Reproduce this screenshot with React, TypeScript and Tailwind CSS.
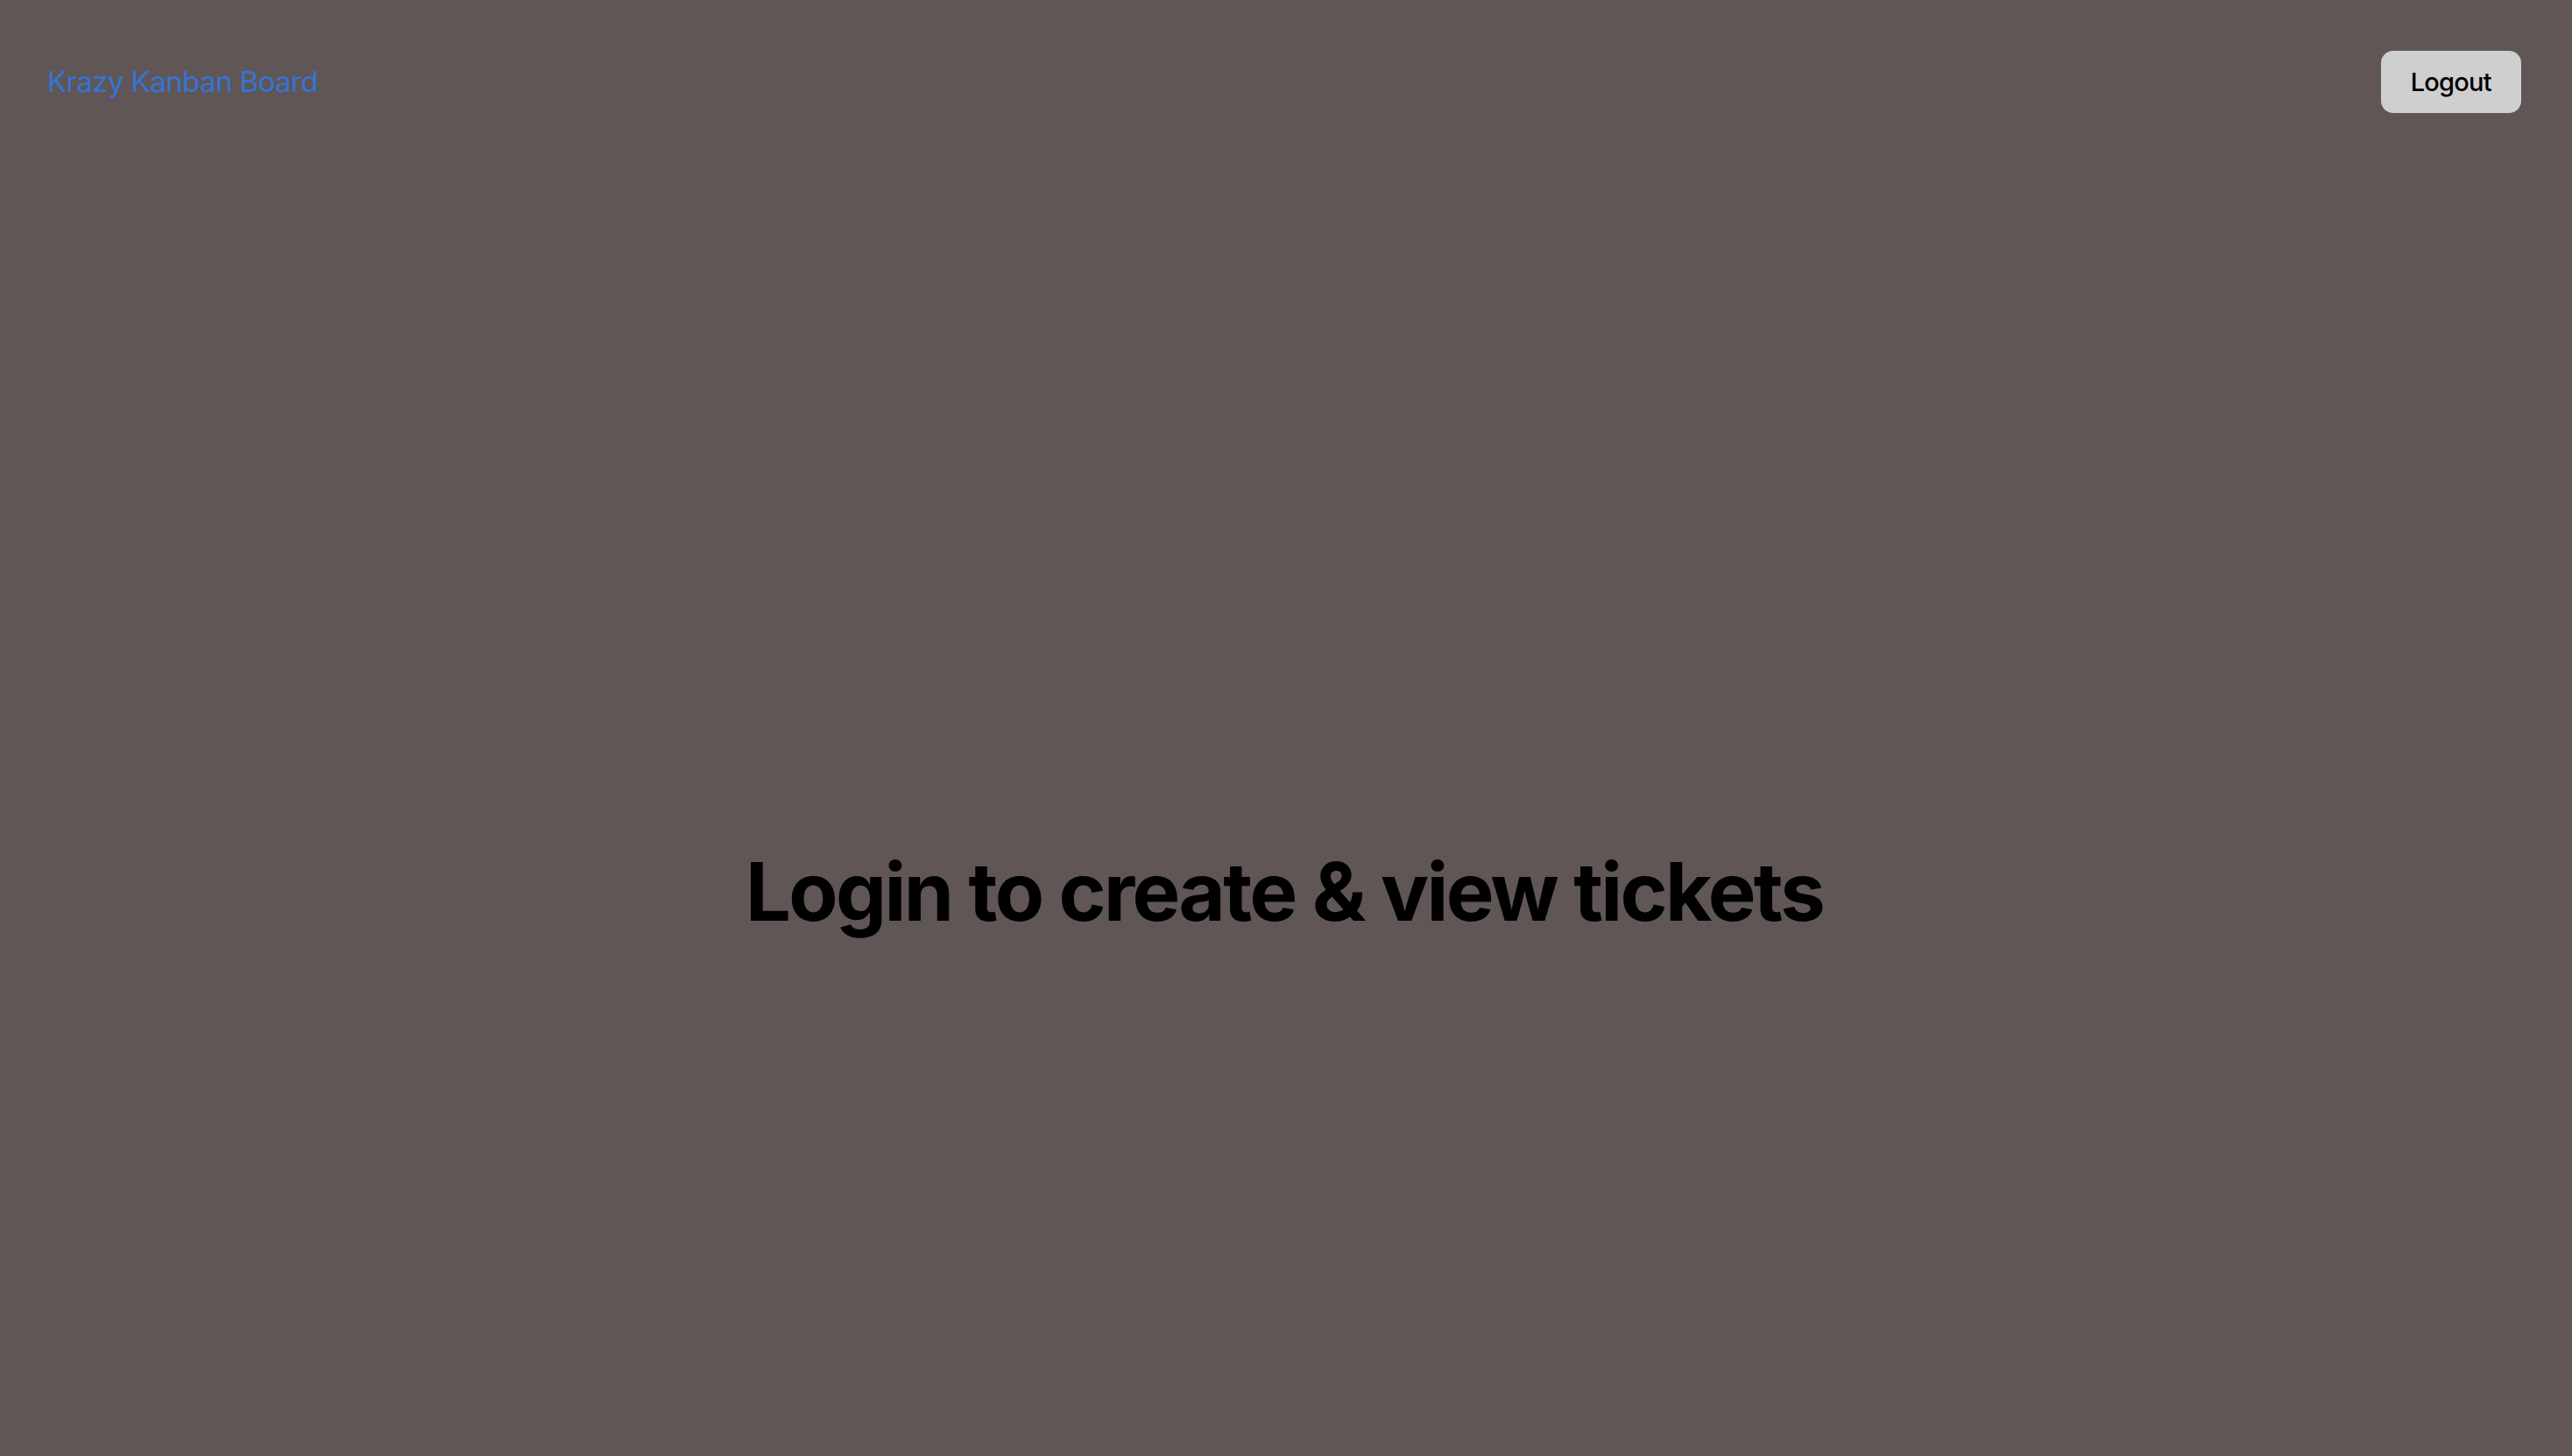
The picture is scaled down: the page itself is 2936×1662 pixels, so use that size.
import React from 'react';

const App: React.FC = () => {
  return (
    <div
      className="min-h-screen w-full bg-[#605656] flex flex-col"
      style={{ fontFamily: 'Inter, "Noto Sans", sans-serif' }}
    >
      {/* Nav */}
      <nav className="flex items-center justify-between pl-[54px] pr-[58px] pt-[58px]">
        <a href="#" className="text-[33px] leading-none text-[#3574d4] tracking-[-0.018em]">
          Krazy Kanban Board
        </a>
        <button className="h-[71px] px-[34px] rounded-[14px] bg-[#cfcfcf] text-black text-[29px] font-medium tracking-[-0.025em]">
          Logout
        </button>
      </nav>

      {/* Main */}
      <main className="flex justify-center pt-[831px] pr-[4px]">
        <h1 className="text-[92px] font-bold leading-tight text-black tracking-[-0.029em]">
          Login to create &amp; view tickets
        </h1>
      </main>
    </div>
  );
};

export default App;
